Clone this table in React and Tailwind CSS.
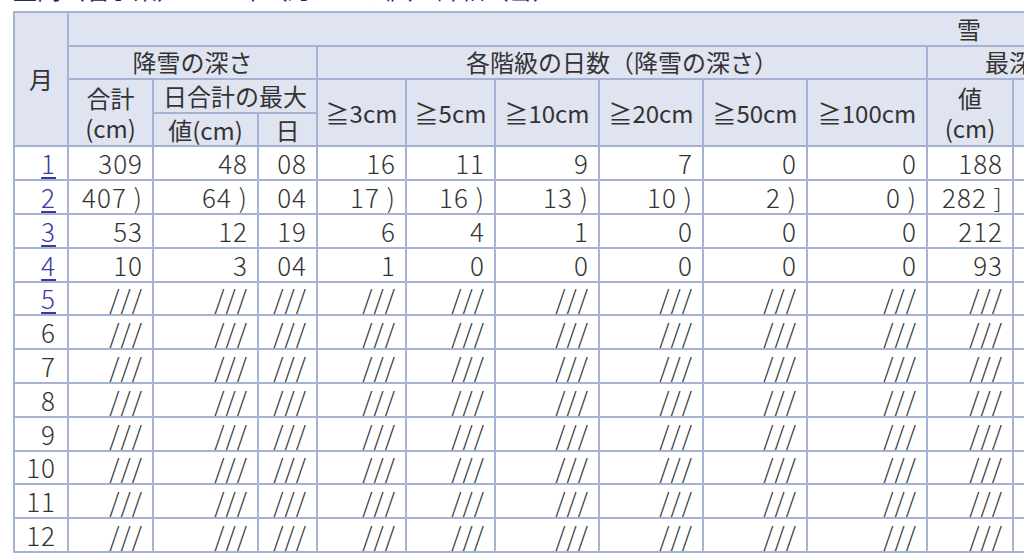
import React from 'react'

const widths = [54, 85, 105, 59, 89, 89, 104, 104, 104, 120, 86, 124, 733]

const rows = [
  ['1', '309', '48', '08', '16', '11', '9', '7', '0', '0', '188', ''],
  ['2', '407 )', '64 )', '04', '17 )', '16 )', '13 )', '10 )', '2 )', '0 )', '282 ]', '24'],
  ['3', '53', '12', '19', '6', '4', '1', '0', '0', '0', '212', '01'],
  ['4', '10', '3', '04', '1', '0', '0', '0', '0', '0', '93', '03'],
]

const linked = ['1', '2', '3', '4', '5']

for (let m = 5; m <= 12; m++) {
  rows.push([String(m), '///', '///', '///', '///', '///', '///', '///', '///', '///', '///', ''])
}

const th = 'border-2 border-[#a6b2d2] bg-[#dfe4f0] font-normal text-[#333] text-center leading-[28px] h-[33.6px] p-0'
const td = 'border-2 border-[#a6b2d2] bg-white text-right pr-[9px] h-[33.8px] leading-[28px] p-0 font-light tracking-[1px]'

function Val({ v }) {
  // keep the wide gap before ")" / "]" seen in the page
  const m = v.match(/^(\S+) ([)\]])$/)
  if (!m) return v
  return (
    <>
      {m[1]}
      <span className="ml-[7px]">{m[2]}</span>
    </>
  )
}

export default function App() {
  return (
    <div className="w-[1024px] h-[556px] overflow-hidden bg-white" style={{ fontFamily: '"Noto Sans CJK JP", "Noto Sans", sans-serif' }}>
      <div className="h-[11px] overflow-hidden relative">
        <div className="absolute left-[13px] bottom-[7px] whitespace-nowrap text-[24px] leading-[30px] text-[#232a55]">
          盛岡（岩手県） 2023年（月ごとの値） 詳細（雪）
        </div>
      </div>
      <table className="ml-[13px] border-collapse table-fixed text-[24px] text-[#333]" style={{ width: widths.reduce((a, b) => a + b, 0) }}>
        <colgroup>
          {widths.map((w, i) => (
            <col key={i} style={{ width: w }} />
          ))}
        </colgroup>
        <thead>
          <tr>
            <th rowSpan={4} className={th}>月</th>
            <th colSpan={12} className={th}>雪</th>
          </tr>
          <tr>
            <th colSpan={3} className={th}>降雪の深さ</th>
            <th colSpan={6} className={th}>各階級の日数（降雪の深さ）</th>
            <th colSpan={2} className={`${th} text-left pl-[57px]`}>最深積雪</th>
            <th className={th}>最深積雪の起日</th>
          </tr>
          <tr>
            <th rowSpan={2} className={`${th} leading-[30px]`}>
              合計<br />(cm)
            </th>
            <th colSpan={2} className={th}>日合計の最大</th>
            <th rowSpan={2} className={th}>≧3cm</th>
            <th rowSpan={2} className={th}>≧5cm</th>
            <th rowSpan={2} className={th}>≧10cm</th>
            <th rowSpan={2} className={th}>≧20cm</th>
            <th rowSpan={2} className={th}>≧50cm</th>
            <th rowSpan={2} className={th}>≧100cm</th>
            <th rowSpan={2} className={`${th} leading-[30px]`}>
              値<br />(cm)
            </th>
            <th rowSpan={2} className={th}></th>
            <th rowSpan={2} className={th}></th>
          </tr>
          <tr>
            <th className={th}>値(cm)</th>
            <th className={th}>日</th>
          </tr>
        </thead>
        <tbody className="text-[26px]">
          {rows.map((r) => (
            <tr key={r[0]}>
              <td className={`${td} pr-[11px]`}>
                {linked.includes(r[0]) ? (
                  <a href="#" className="text-[#3a3aa8] underline underline-offset-[3px]">{r[0]}</a>
                ) : (
                  r[0]
                )}
              </td>
              {r.slice(1, 11).map((v, i) => (
                <td key={i} className={td}><Val v={v} /></td>
              ))}
              <td className={`${td} text-left pl-[3px]`}>{r[11]}</td>
              <td className={td}></td>
            </tr>
          ))}
        </tbody>
      </table>
    </div>
  )
}
